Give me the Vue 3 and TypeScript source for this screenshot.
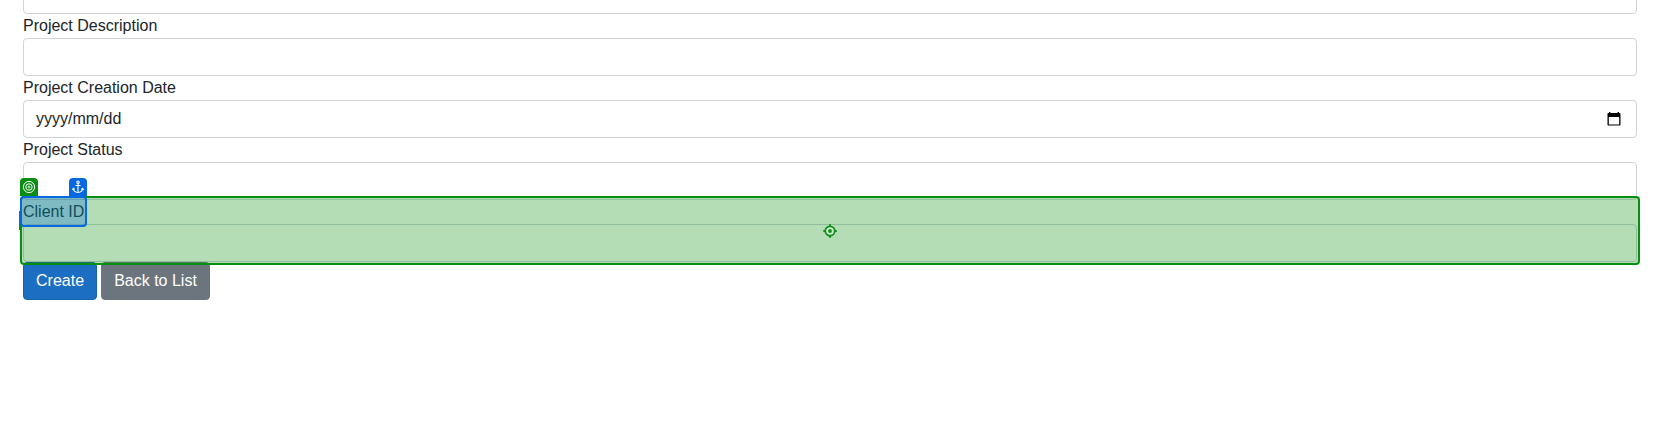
<script setup lang="ts">
interface Field {
  label: string
  date?: boolean
}

const fields: Field[] = [
  { label: 'Project Description' },
  { label: 'Project Creation Date', date: true },
  { label: 'Project Status' },
]
</script>

<template>
  <main class="page">
    <form class="form" @submit.prevent>
      <div class="control"></div>
      <div v-for="field in fields" :key="field.label" class="group">
        <label class="label">{{ field.label }}</label>
        <div class="control">
          <template v-if="field.date">
            <span>yyyy/mm/dd</span>
            <svg class="calendar" width="14" height="16" viewBox="0 0 14 16">
              <path d="M2 1h1.400v2H2zM10.600 1H12v2h-1.400z" fill="#000" />
              <path d="M1.300 2h11.400a.8.8 0 0 1 .8.8v11a.8.8 0 0 1-.8.8H1.300a.8.8 0 0 1-.8-.8v-11a.8.8 0 0 1 .8-.8zM1.800 6v7.500h10.400V6z" fill="#000" fill-rule="evenodd" />
            </svg>
          </template>
        </div>
      </div>
      <div class="group">
        <label class="label">Client ID</label>
        <div class="control"></div>
        <div class="stub"></div>
        <div class="target">
          <svg class="locate" width="14" height="14" viewBox="0 0 14 14" fill="none" stroke="#098f14">
            <circle cx="7" cy="7" r="4.700" stroke-width="1.700" fill="#d8efd9" />
            <path d="M7 .3v2M7 11.700v2M.3 7h2M11.700 7h2" stroke-width="2" />
            <circle cx="7" cy="7" r="1.900" fill="#098f14" stroke="none" />
          </svg>
        </div>
        <div class="anchor-box"></div>
        <div class="badge badge-target">
          <svg width="14" height="14" viewBox="0 0 14 14" fill="none" stroke="#fff">
            <circle cx="7" cy="7" r="5.600" />
            <circle cx="7" cy="7" r="3.200" />
            <circle cx="7" cy="7" r="1" stroke-width=".8" />
          </svg>
        </div>
        <div class="badge badge-anchor">
          <svg width="14" height="14" viewBox="0 0 14 14" fill="none" stroke="#fff" stroke-width="1.100">
            <circle cx="7" cy="2.200" r="1.200" />
            <path d="M7 3.400V12.500M4.500 5.500h5M2.300 8.500c.2 2.400 2 3.800 4.700 4c2.700-.2 4.500-1.600 4.700-4M1.500 9.900L2.300 8.400l1.500 1M12.500 9.900L11.700 8.400l-1.500 1" />
          </svg>
        </div>
      </div>
      <div class="actions">
        <button class="btn primary" type="submit">Create</button>
        <button class="btn secondary" type="button">Back to List</button>
      </div>
    </form>
  </main>
</template>

<style>
body {
  margin: 0;
  background: #fff;
}
</style>

<style scoped>
.page {
  height: 442px;
  overflow: hidden;
  box-sizing: border-box;
  padding: 0 23px;
  color: #212529;
  font: 16px/24px "Liberation Sans", Arial, sans-serif;
}
.form {
  margin-top: -24px;
}
.group {
  position: relative;
}
.label {
  display: block;
  height: 24px;
}
.control {
  display: flex;
  align-items: center;
  justify-content: space-between;
  box-sizing: border-box;
  height: 38px;
  padding: 0 15px 0 12px;
  border: 1px solid #ced4da;
  border-radius: 4px;
  background: #fff;
}
.calendar {
  display: block;
}
.target,
.anchor-box,
.stub,
.badge {
  position: absolute;
  box-sizing: border-box;
  z-index: 2;
}
.target {
  top: -4px;
  left: -3px;
  right: -3px;
  height: 69px;
  border: 2px solid #088f13;
  border-radius: 4px;
  background: rgba(8, 143, 10, 0.3);
  display: flex;
  align-items: center;
  justify-content: center;
}
.locate {
  display: block;
}
.anchor-box {
  top: -4px;
  left: -3px;
  width: 67px;
  height: 31px;
  border: 2px solid #0568e0;
  border-radius: 4px;
  background: rgba(5, 104, 224, 0.3);
}
.stub {
  top: 11px;
  left: -4px;
  width: 1px;
  height: 19px;
  background: #0568e0;
}
.badge {
  top: -22px;
  width: 18px;
  height: 18px;
  border-radius: 4px 4px 0 0;
  display: flex;
  align-items: center;
  justify-content: center;
}
.badge-target {
  left: -3px;
  background: #088f13;
}
.badge-anchor {
  left: 46px;
  background: #0568e0;
}
.actions {
  display: flex;
  gap: 4px;
}
.btn {
  box-sizing: border-box;
  height: 38px;
  padding: 0 12px;
  border: 1px solid;
  border-radius: 4px;
  color: #fff;
  font: inherit;
}
.primary {
  width: 74px;
  background: #1b6ec2;
  border-color: #1861ac;
}
.secondary {
  width: 109px;
  background: #6c757d;
  border-color: #6c757d;
}
</style>
